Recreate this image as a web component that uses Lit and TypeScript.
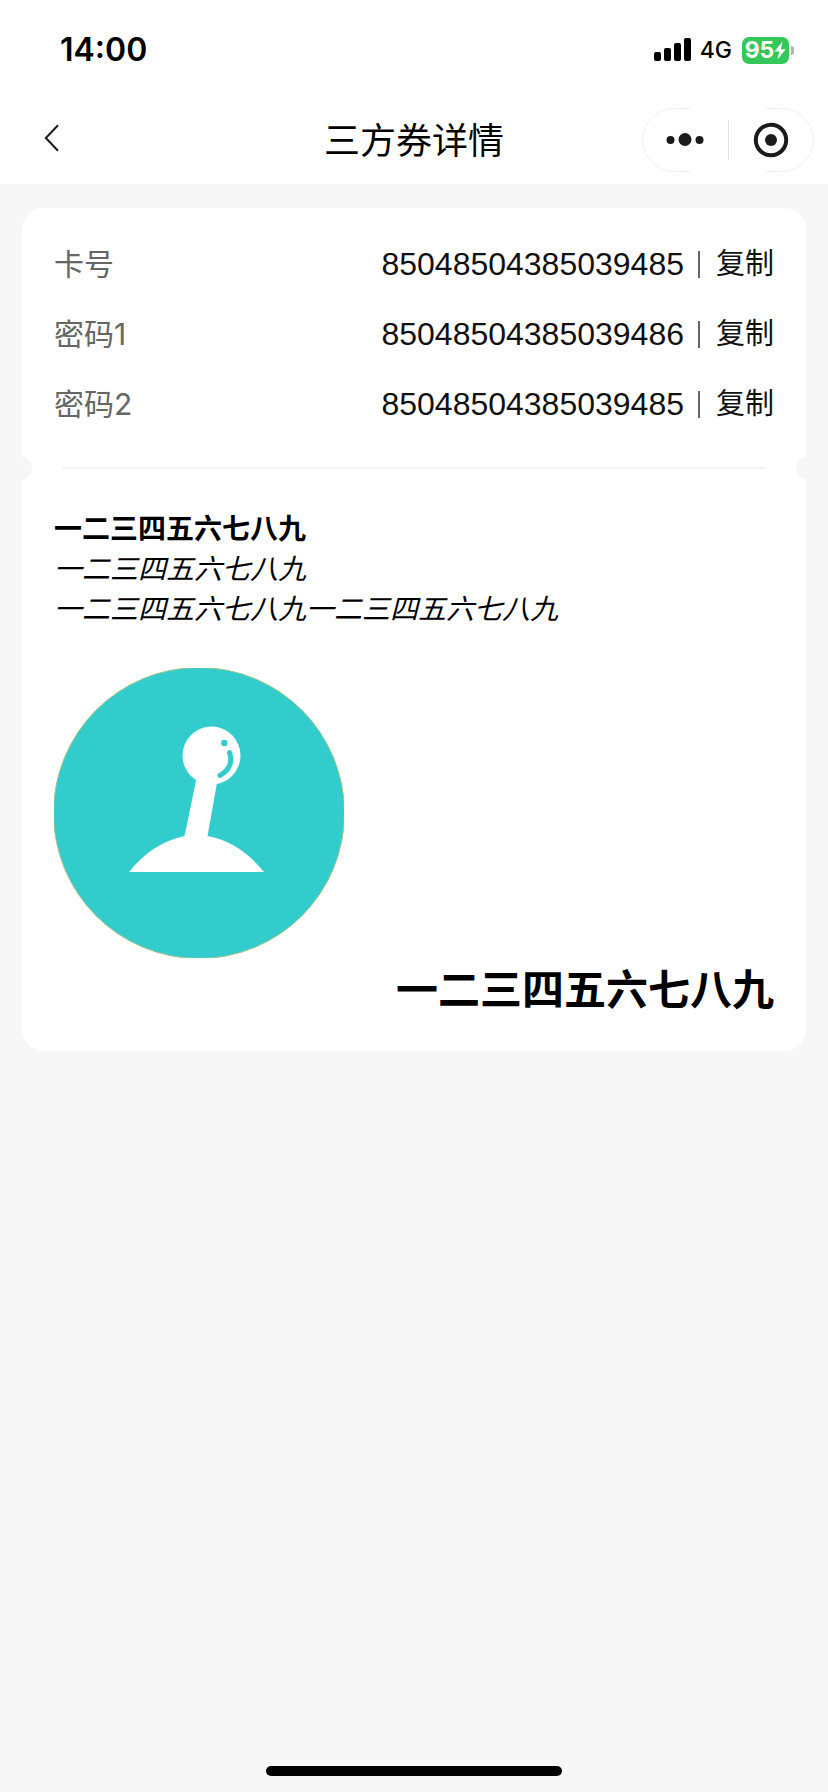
import { LitElement, html, css } from "lit";
import { customElement, property } from "lit/decorators.js";

interface VoucherField {
  label: string;
  value: string;
}

const FIELDS: VoucherField[] = [
  { label: "卡号", value: "85048504385039485" },
  { label: "密码1", value: "85048504385039486" },
  { label: "密码2", value: "85048504385039485" },
];

@customElement("status-bar")
class StatusBar extends LitElement {
  static styles = css`
    :host {
      display: flex;
      align-items: center;
      justify-content: space-between;
      height: 96px;
      padding: 4px 34px 0 60px;
      box-sizing: border-box;
    }
    .time {
      font-size: 32px;
      font-weight: 600;
      line-height: 40px;
    }
    .indicators {
      display: flex;
      align-items: center;
    }
    .network {
      margin: 0 10px 0 8px;
      font-size: 23px;
      font-weight: 500;
      line-height: 28px;
    }
    .battery {
      display: flex;
      align-items: center;
      justify-content: center;
      box-sizing: border-box;
      width: 47px;
      height: 27px;
      border-radius: 7px;
      background: #34c759;
      color: #fff;
      font-size: 23px;
      font-weight: 700;
      line-height: 27px;
    }
    .cap {
      width: 3px;
      height: 9px;
      margin-left: 2px;
      border-radius: 0 4px 4px 0;
      background: #b4b4b4;
    }
    svg {
      display: block;
    }
  `;

  render() {
    return html`
      <span class="time">14:00</span>
      <div class="indicators">
        <svg width="38" height="24" viewBox="0 0 38 24" aria-hidden="true">
          <rect x="0" y="14" width="7" height="9" rx="2" />
          <rect x="10" y="10" width="7" height="13" rx="2" />
          <rect x="20" y="5" width="7" height="18" rx="2" />
          <rect x="30" y="0" width="7" height="23" rx="2" />
        </svg>
        <span class="network">4G</span>
        <span class="battery">
          95
          <svg width="12" height="19" viewBox="0 0 12 19" aria-hidden="true">
            <path d="M8.6 0.6 0.4 10.6h4.9L3.4 18.4 11.7 8.3H6.9z" fill="#fff" />
          </svg>
        </span>
        <span class="cap"></span>
      </div>
    `;
  }
}

@customElement("nav-bar")
class NavBar extends LitElement {
  @property() heading = "";

  static styles = css`
    :host {
      display: grid;
      grid-template-columns: 1fr auto 1fr;
      align-items: center;
      height: 88px;
      padding: 0 14px;
      box-sizing: border-box;
    }
    button {
      display: grid;
      place-items: center;
      margin: 0;
      padding: 0;
      border: 0;
      background: none;
      cursor: pointer;
    }
    svg {
      display: block;
    }
    .back {
      width: 76px;
      height: 56px;
      padding-bottom: 4px;
    }
    .title {
      margin: 0;
      padding-bottom: 4px;
      font-family: "Noto Sans CJK SC", sans-serif;
      font-size: 36px;
      font-weight: 400;
      line-height: 48px;
    }
    .capsule {
      position: relative;
      justify-self: end;
      display: grid;
      grid-template-columns: 1fr 1fr;
      width: 172px;
      height: 64px;
    }
    .outline {
      position: absolute;
      inset: 0;
      pointer-events: none;
    }
  `;

  render() {
    return html`
      <button class="back" type="button" aria-label="返回">
        <svg width="16" height="28" viewBox="0 0 16 28" fill="none" stroke="#1a1a1a" stroke-width="2">
          <path d="M14 1.2 1.8 14 14 26.8" />
        </svg>
      </button>
      <h1 class="title">${this.heading}</h1>
      <div class="capsule">
        <svg class="outline" width="172" height="64" viewBox="0 0 172 64" fill="none" stroke="#f0f0f0">
          <path d="M49 .5H32a31.500 31.500 0 0 0 0 63H49M123 .5h17a31.500 31.500 0 0 1 0 63h-17" />
          <path d="M86.500 12v40" stroke="#e2e2e2" />
        </svg>
        <button type="button" aria-label="更多">
          <svg width="38" height="14" viewBox="0 0 38 14" fill="#1a1a1a">
            <circle cx="4.500" cy="7" r="4" />
            <circle cx="19" cy="6.500" r="6.500" />
            <circle cx="33.500" cy="7" r="4" />
          </svg>
        </button>
        <button type="button" aria-label="关闭">
          <svg width="36" height="36" viewBox="0 0 36 36">
            <circle cx="18" cy="18" r="15.200" fill="none" stroke="#1a1a1a" stroke-width="4" />
            <circle cx="18" cy="18" r="6" fill="#1a1a1a" />
          </svg>
        </button>
      </div>
    `;
  }
}

@customElement("voucher-card")
class VoucherCard extends LitElement {
  @property({ attribute: false }) fields: VoucherField[] = [];

  static styles = css`
    :host {
      display: block;
      overflow: hidden;
      border-radius: 22px;
      background: #fff;
    }
    .fields {
      display: grid;
      gap: 30px;
      margin: 0;
      padding: 36px 32px 32px;
      font-size: 29px;
      line-height: 40px;
    }
    .row {
      display: flex;
      align-items: center;
      justify-content: space-between;
    }
    dt {
      color: #666;
      font-size: 30px;
    }
    dd {
      display: flex;
      align-items: center;
      margin: 0;
      color: #111;
    }
    .value {
      font-family: "Liberation Sans", Arial, sans-serif;
      font-size: 32px;
    }
    .bar {
      width: 2px;
      height: 27px;
      margin: 0 16px 0 14px;
      background: #666;
    }
    button {
      margin: 0;
      padding: 0;
      border: 0;
      background: none;
      color: inherit;
      font: inherit;
      cursor: pointer;
    }
    .tear {
      display: flex;
      align-items: center;
      justify-content: space-between;
      gap: 30px;
      margin: 0 -14px;
    }
    .notch {
      width: 24px;
      height: 24px;
      border-radius: 50%;
      background: #f7f7f7;
    }
    .line {
      flex: 1;
      height: 2px;
      margin: 0;
      border: 0;
      background: #f5f5f5;
    }
    .details {
      padding: 27px 32px 35px;
      color: #000;
      font-family: "Noto Sans CJK SC", sans-serif;
      font-size: 28px;
      line-height: 40px;
    }
    p {
      margin: 0;
    }
    .strong {
      font-weight: 700;
    }
    .slanted {
      font-style: italic;
    }
    .picture {
      display: block;
      margin-top: 41px;
    }
    .signature {
      font-size: 42px;
      font-weight: 700;
      line-height: 58px;
      text-align: right;
    }
  `;

  private copy(value: string) {
    navigator.clipboard?.writeText(value);
  }

  render() {
    return html`
      <dl class="fields">
        ${this.fields.map(
          (field) => html`
            <div class="row">
              <dt>${field.label}</dt>
              <dd>
                <span class="value">${field.value}</span>
                <span class="bar"></span>
                <button type="button" @click=${() => this.copy(field.value)}>复制</button>
              </dd>
            </div>
          `
        )}
      </dl>
      <div class="tear">
        <span class="notch"></span>
        <hr class="line" />
        <span class="notch"></span>
      </div>
      <div class="details">
        <p class="strong">一二三四五六七八九</p>
        <p class="slanted">一二三四五六七八九</p>
        <p class="slanted">一二三四五六七八九一二三四五六七八九</p>
        <svg class="picture" width="290" height="290" viewBox="0 0 290 290" role="img" aria-label="摇杆">
          <clipPath id="frame"><rect width="290" height="290" /></clipPath>
          <circle cx="145" cy="145" r="145.500" fill="#33cccc" stroke="#a6c48a" clip-path="url(#frame)" />
          <g fill="#fff">
            <circle cx="157.500" cy="87.500" r="29" />
            <path d="M143 108 130.500 168Q98 175 75 204H210Q186 174 153.500 168L163.500 112z" />
          </g>
          <circle cx="170.300" cy="75" r="3.200" fill="#33cccc" />
          <path d="M175.500 84.500Q180.500 99 166 107.500" fill="none" stroke="#33cccc" stroke-width="5" stroke-linecap="round" />
        </svg>
        <p class="signature">一二三四五六七八九</p>
      </div>
    `;
  }
}

@customElement("app-root")
class AppRoot extends LitElement {
  static styles = css`
    :host {
      display: flex;
      flex-direction: column;
      min-height: 100vh;
      background: #f7f7f7;
      color: #000;
      font-family: Inter, "Noto Sans CJK SC", sans-serif;
    }
    header {
      background: #fff;
    }
    main {
      flex: 1;
      padding: 24px 22px;
    }
    .home {
      align-self: center;
      width: 296px;
      height: 10px;
      margin-bottom: 16px;
      border-radius: 5px;
      background: #000;
    }
  `;

  render() {
    return html`
      <header>
        <status-bar></status-bar>
        <nav-bar heading="三方券详情"></nav-bar>
      </header>
      <main>
        <voucher-card .fields=${FIELDS}></voucher-card>
      </main>
      <div class="home"></div>
    `;
  }
}
